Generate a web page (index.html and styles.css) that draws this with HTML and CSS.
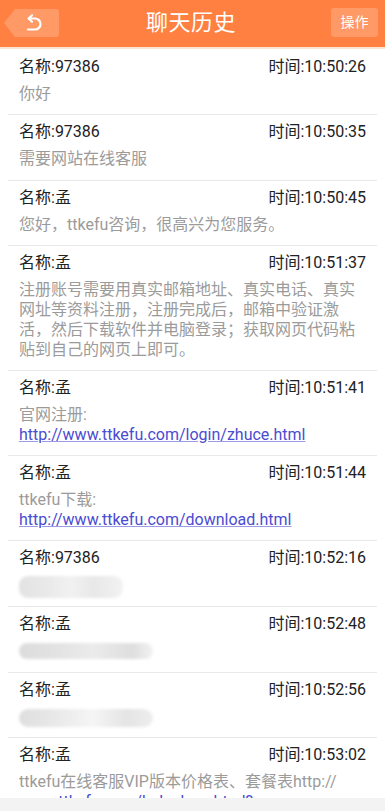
FILE: index.html
```html
<!DOCTYPE html>
<html lang="zh-CN">
<head>
<meta charset="utf-8">
<title>聊天历史</title>
<link rel="stylesheet" href="styles.css">
</head>
<body>
<header class="topbar">
  <a class="back" href="#" aria-label="返回">
    <svg class="back-shape" width="56" height="30" viewBox="0 0 56 30">
      <path d="M0 15 L11 1 H52 Q55 1 55 4 V26 Q55 29 52 29 H11 Z" fill="rgba(255,255,255,0.2)"/>
      <path d="M25 10.5 H31 A5.5 5.5 0 0 1 31 21.5 H24" fill="none" stroke="#fff" stroke-width="2.2" stroke-linecap="round"/>
      <path d="M28 7.3 L24.6 10.5 L28 13.7" fill="none" stroke="#fff" stroke-width="2.2" stroke-linecap="round" stroke-linejoin="round"/>
    </svg>
  </a>
  <h1 class="title">聊天历史</h1>
  <div class="actions"><button class="op">操作</button></div>
</header>

<main class="list">
  <div class="item">
    <div class="meta"><span>名称:97386</span><span>时间:10:50:26</span></div>
    <div class="msg">你好</div>
  </div>
  <div class="item">
    <div class="meta"><span>名称:97386</span><span>时间:10:50:35</span></div>
    <div class="msg">需要网站在线客服</div>
  </div>
  <div class="item">
    <div class="meta"><span>名称:孟</span><span>时间:10:50:45</span></div>
    <div class="msg">您好，ttkefu咨询，很高兴为您服务。</div>
  </div>
  <div class="item">
    <div class="meta"><span>名称:孟</span><span>时间:10:51:37</span></div>
    <div class="msg">注册账号需要用真实邮箱地址、真实电话、真实网址等资料注册，注册完成后，邮箱中验证激活，然后下载软件并电脑登录；获取网页代码粘贴到自己的网页上即可。</div>
  </div>
  <div class="item">
    <div class="meta"><span>名称:孟</span><span>时间:10:51:41</span></div>
    <div class="msg">官网注册:<br><a href="#">http://www.ttkefu.com/login/zhuce.html</a></div>
  </div>
  <div class="item">
    <div class="meta"><span>名称:孟</span><span>时间:10:51:44</span></div>
    <div class="msg">ttkefu下载:<br><a href="#">http://www.ttkefu.com/download.html</a></div>
  </div>
  <div class="item">
    <div class="meta"><span>名称:97386</span><span>时间:10:52:16</span></div>
    <div class="msg msg-media"><span class="blur b1"></span></div>
  </div>
  <div class="item">
    <div class="meta"><span>名称:孟</span><span>时间:10:52:48</span></div>
    <div class="msg msg-media"><span class="blur b2"></span></div>
  </div>
  <div class="item">
    <div class="meta"><span>名称:孟</span><span>时间:10:52:56</span></div>
    <div class="msg msg-media"><span class="blur b3"></span></div>
  </div>
  <div class="item">
    <div class="meta"><span>名称:孟</span><span>时间:10:53:02</span></div>
    <div class="msg">ttkefu在线客服VIP版本价格表、套餐表http://<wbr>www.<a href="#">ttkefu.com/helpshow.html?id=254&amp;leibie=6</a></div>
  </div>
</main>
<div class="bottombar"></div>
</body>
</html>
```

FILE: styles.css
```css
* { box-sizing: border-box; }

html, body {
  margin: 0;
  padding: 0;
  background: #fff;
  height: 100%;
  overflow: hidden;
}

body {
  font-family: Roboto, "Noto Sans CJK SC", sans-serif;
  color: #222;
}

.topbar {
  display: grid;
  grid-template-columns: 1fr auto 1fr;
  align-items: center;
  height: 49px;
  padding: 0 7px 2px 4px;
  background: #ff8040;
  border-bottom: 2px solid #fde3d3;
}

.back {
  display: flex;
  align-items: center;
  justify-self: start;
  width: 56px;
  height: 30px;
}

.back-shape { display: block; }

.title {
  margin: 0;
  font-size: 22px;
  font-weight: normal;
  color: #fff;
  line-height: 30px;
  letter-spacing: 0.5px;
}

.actions {
  display: flex;
  justify-content: flex-end;
}

.op {
  width: 47px;
  height: 29px;
  padding: 0;
  border: none;
  border-radius: 3px;
  background: rgba(255, 255, 255, 0.2);
  color: #fff;
  font-family: inherit;
  font-size: 14px;
  line-height: 29px;
}

.list {
  padding-top: 1px;
}

.item {
  margin: 0 8px;
  padding: 6px 11px 10.7px;
  border-bottom: 1px solid #e8e8e8;
}

.meta {
  display: flex;
  justify-content: space-between;
  font-size: 16px;
  line-height: 22px;
  color: #222;
}

.msg {
  margin-top: 6px;
  font-size: 16px;
  line-height: 19.75px;
  color: #9b9b9b;
}

.msg a {
  color: #4b4bd2;
  text-decoration: underline;
  text-decoration-color: #9a9ae6;
}

.msg-media {
  display: flex;
  align-items: center;
  height: 20px;
}

.blur {
  display: block;
  border-radius: 9px;
  filter: blur(1.5px);
}

.b1 {
  width: 104px;
  height: 22px;
  margin-top: 4px;
  background: linear-gradient(90deg, #e2e2e2 0%, #eaeaea 30%, #f1f1f1 50%, #e8e8e8 72%, #f2f2f2 100%);
}

.b2 {
  width: 134px;
  height: 16px;
  background: linear-gradient(90deg, #dcdcdc 0%, #e3e3e3 30%, #ebebeb 55%, #dedede 85%, #f2f2f2 100%);
}

.b3 {
  width: 134px;
  height: 18px;
  margin-top: 2px;
  background: linear-gradient(90deg, #dedede 0%, #e8e8e8 25%, #f5f5f5 55%, #e4e4e4 80%, #eeeeee 100%);
}

.bottombar {
  position: fixed;
  left: 0;
  right: 0;
  bottom: 0;
  height: 13px;
  background: #f3f3f3;
}
```
